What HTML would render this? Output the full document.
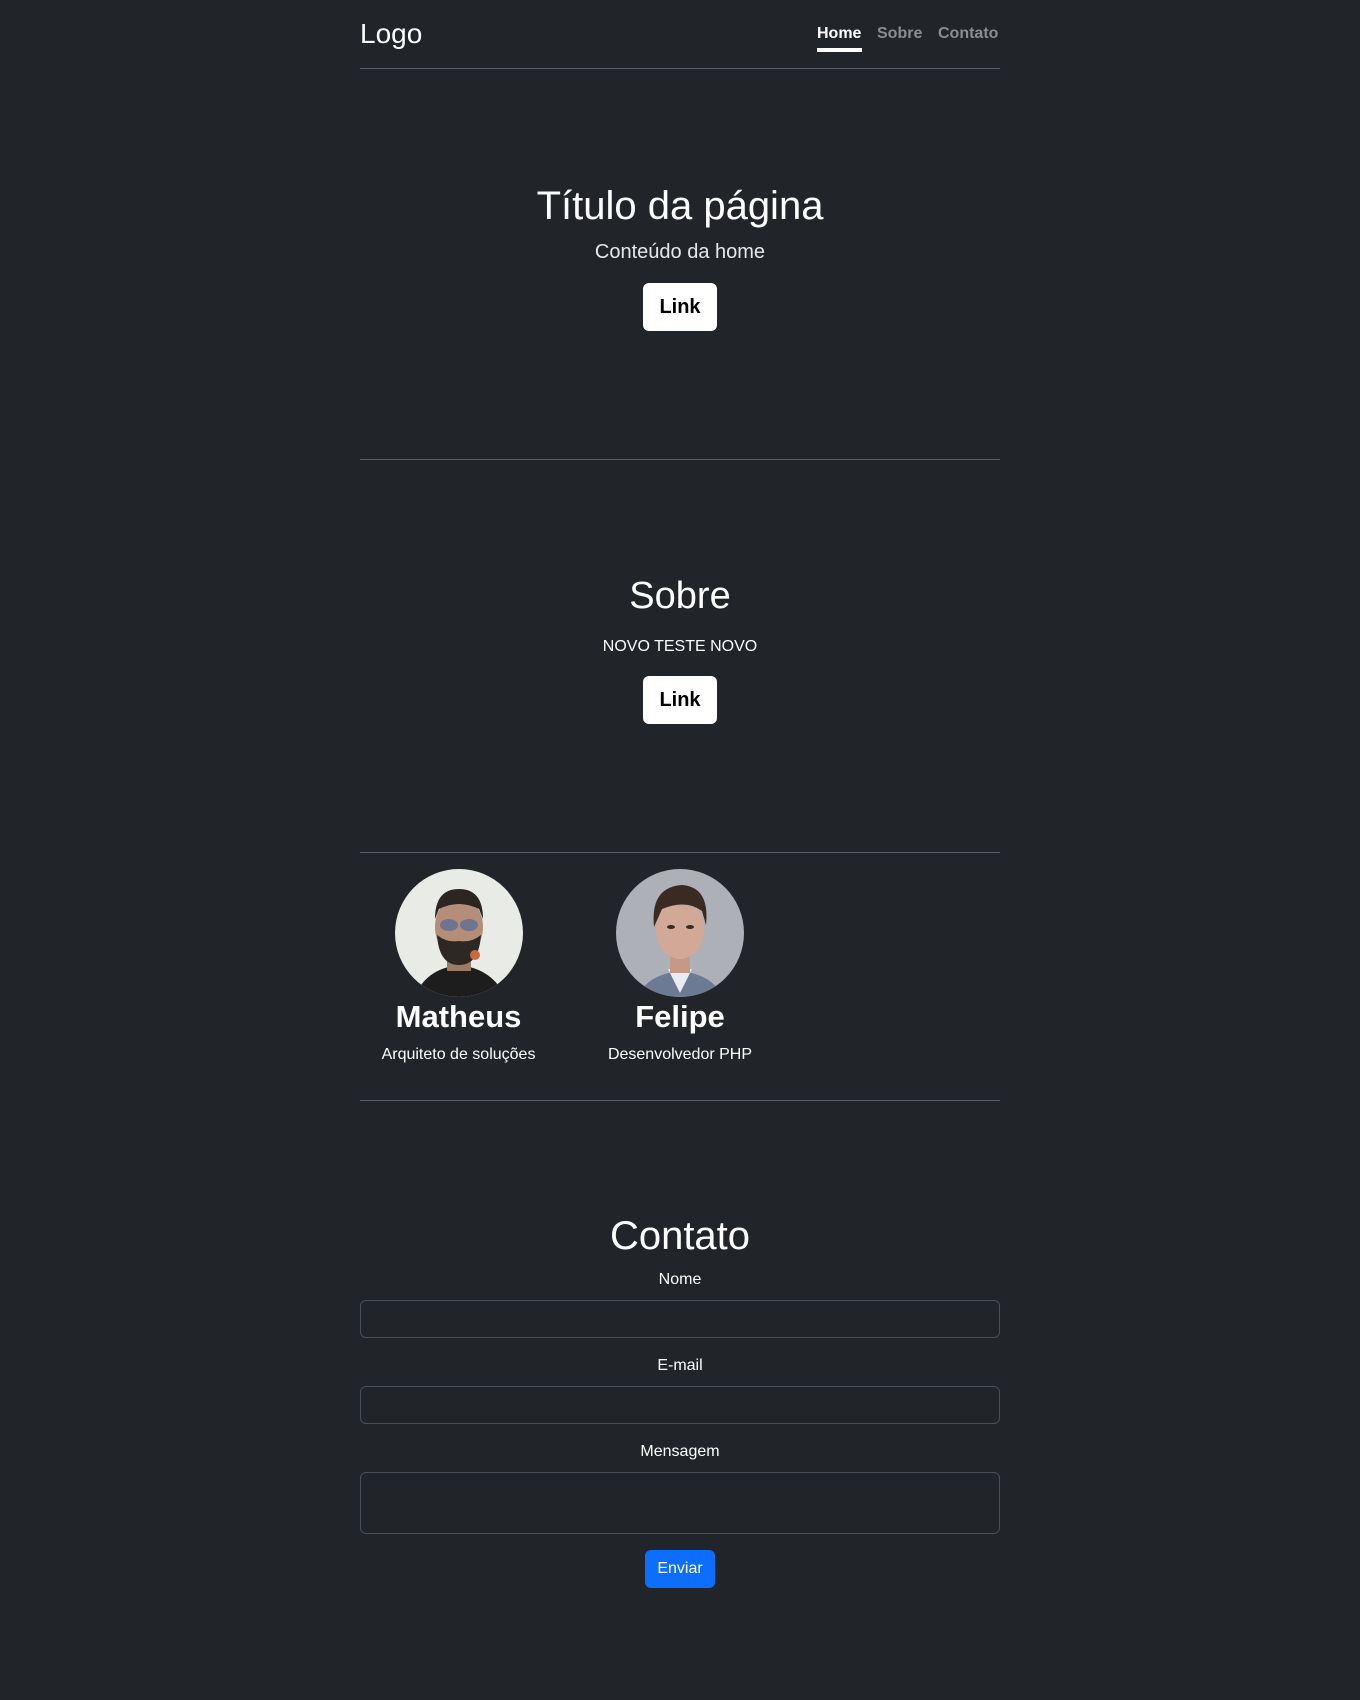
<!DOCTYPE html>
<html><head><meta charset="utf-8"><style>
*{margin:0;padding:0;box-sizing:border-box}
body{width:1360px;height:1700px;background:#212529;color:#fff;font-family:"Liberation Sans",sans-serif;position:relative;overflow:hidden}
.a{position:absolute;line-height:1;white-space:nowrap}
.c{left:360px;width:640px;text-align:center}
.hr{position:absolute;left:360px;width:640px;height:1px;background:#5a5f65}
.btn{position:absolute;left:643px;width:74px;height:48px;background:#fff;border-radius:6px;color:#000;font-weight:bold;font-size:20px;display:flex;align-items:center;justify-content:center}
.inp{position:absolute;left:360px;width:640px;border:1px solid #495057;border-radius:6px;background:#212529}
.av{position:absolute;top:869px;width:128px;height:128px;border-radius:50%;overflow:hidden}
</style></head><body>
<div class="a" style="left:360px;top:20px;font-size:28px">Logo</div>
<div class="a" style="left:817px;top:26px;font-size:16px;font-weight:bold">Home</div>
<div style="position:absolute;left:817px;top:48px;width:45px;height:4px;background:#fff"></div>
<div class="a" style="left:877px;top:26px;font-size:16px;font-weight:bold;color:#8a8d91">Sobre</div>
<div class="a" style="left:938px;top:26px;font-size:16px;font-weight:bold;color:#8a8d91">Contato</div>
<div class="hr" style="top:68px"></div>

<div class="a c" style="top:186px;font-size:40px">Título da página</div>
<div class="a c" style="top:242px;font-size:20px;color:#e6e8ea">Conteúdo da home</div>
<div class="btn" style="top:283px">Link</div>
<div class="hr" style="top:459px"></div>

<div class="a c" style="top:577px;font-size:38px">Sobre</div>
<div class="a c" style="top:639px;font-size:16px">NOVO TESTE NOVO</div>
<div class="btn" style="top:676px">Link</div>
<div class="hr" style="top:852px"></div>

<div class="av" style="left:395px">
<svg width="128" height="128" viewBox="0 0 128 128"><rect width="128" height="128" fill="#e9ebe6"/>
<path d="M20 128 Q30 100 64 96 Q98 100 110 128Z" fill="#1d1d1d"/>
<rect x="52" y="80" width="24" height="22" fill="#9b7a66"/>
<ellipse cx="64" cy="58" rx="24" ry="30" fill="#b48e78"/>
<path d="M40 50 Q40 20 64 20 Q88 20 88 50 L84 40 Q64 30 44 40Z" fill="#2b2622"/>
<path d="M42 66 Q44 96 64 96 Q84 96 86 66 Q76 74 64 72 Q52 74 42 66Z" fill="#2e2824"/>
<ellipse cx="54" cy="56" rx="9" ry="6" fill="#6f7490"/><ellipse cx="74" cy="56" rx="9" ry="6" fill="#6f7490"/>
<circle cx="80" cy="86" r="5" fill="#c96a3c"/></svg></div>
<div class="av" style="left:616px">
<svg width="128" height="128" viewBox="0 0 128 128"><rect width="128" height="128" fill="#aeb0b8"/>
<path d="M22 128 Q30 106 64 102 Q98 106 106 128Z" fill="#6c7a94"/>
<path d="M52 100 L64 124 L76 100Z" fill="#e8ecf0"/>
<rect x="54" y="82" width="20" height="22" fill="#c49a86"/>
<ellipse cx="64" cy="60" rx="24" ry="30" fill="#d2a996"/>
<path d="M38 58 Q34 18 66 16 Q94 18 90 56 L86 42 Q70 30 46 40Z" fill="#3a2a22"/>
<ellipse cx="55" cy="58" rx="4" ry="2" fill="#3a2a22"/><ellipse cx="74" cy="58" rx="4" ry="2" fill="#3a2a22"/></svg></div>
<div class="a" style="left:360px;width:197px;text-align:center;top:1001px;font-size:31px;font-weight:bold">Matheus</div>
<div class="a" style="left:360px;width:197px;text-align:center;top:1047px;font-size:16px">Arquiteto de soluções</div>
<div class="a" style="left:580px;width:200px;text-align:center;top:1001px;font-size:31px;font-weight:bold">Felipe</div>
<div class="a" style="left:580px;width:200px;text-align:center;top:1047px;font-size:16px">Desenvolvedor PHP</div>
<div class="hr" style="top:1100px"></div>

<div class="a c" style="top:1216px;font-size:40px">Contato</div>
<div class="a c" style="top:1272px;font-size:16px">Nome</div>
<div class="inp" style="top:1300px;height:38px"></div>
<div class="a c" style="top:1358px;font-size:16px">E-mail</div>
<div class="inp" style="top:1386px;height:38px"></div>
<div class="a c" style="top:1444px;font-size:16px">Mensagem</div>
<div class="inp" style="top:1472px;height:62px"></div>
<div style="position:absolute;left:645px;top:1550px;width:70px;height:38px;background:#0d6efd;border-radius:6px;display:flex;align-items:center;justify-content:center;font-size:16px">Enviar</div>
</body></html>
